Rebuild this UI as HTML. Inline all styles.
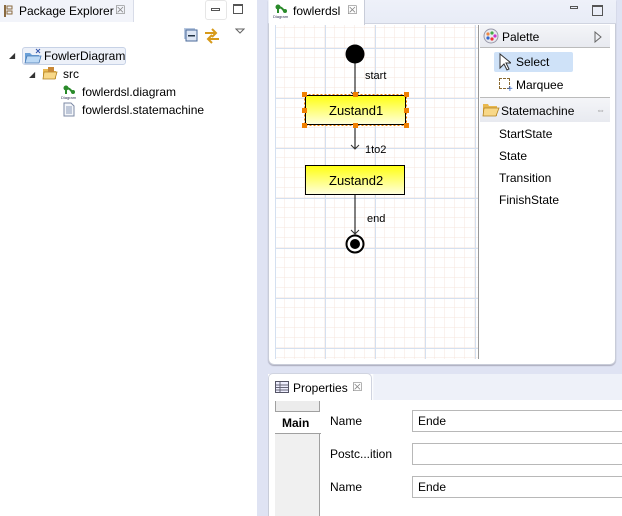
<!DOCTYPE html>
<html><head><style>
*{margin:0;padding:0;box-sizing:border-box}
body{width:622px;height:516px;overflow:hidden;background:#dfe3f3;font-family:"Liberation Sans","DejaVu Sans",sans-serif;font-size:12px;color:#000;position:relative}
.a{position:absolute}
.t{position:absolute;white-space:nowrap}
</style></head><body>
<!-- left panel -->
<div class="a" style="left:0;top:0;width:257px;height:516px;background:#fff"></div>
<div class="a" style="left:0;top:0;width:134px;height:22px;background:#f2f4fa;border-right:1px solid #d8dce8"></div>
<svg class="a" style="left:3px;top:4px" width="10" height="14"><rect x="1" y="1" width="2" height="12" fill="#8a6a40"/><rect x="4" y="2" width="5" height="3" fill="none" stroke="#8a6a40"/><rect x="4" y="7" width="5" height="3" fill="none" stroke="#8a6a40"/></svg>
<div class="t" style="left:19px;top:4px">Package Explorer</div>
<div class="t" style="left:115px;top:3px;color:#888;font-size:12px">&#x2612;</div>
<div class="a" style="left:205px;top:0;width:22px;height:20px;border:1px solid #e6e6e6;border-radius:3px"></div>
<div class="a" style="left:211px;top:8px;width:9px;height:3px;border:1px solid #555"></div>
<div class="a" style="left:233px;top:4px;width:10px;height:10px;border:1px solid #555;border-top-width:2px"></div>
<svg class="a" style="left:182px;top:27px" width="16" height="16"><rect x="2" y="1" width="11" height="11" fill="#b8c8e0"/><rect x="4" y="3" width="11" height="11" fill="#dde6f4" stroke="#4a6a9a"/><rect x="6" y="8" width="7" height="1.5" fill="#234"/></svg>
<svg class="a" style="left:203px;top:27px" width="18" height="18"><path d="M2 6h11M9 2l4 4-4 4M16 12H5M9 8l-4 4 4 4" stroke="#d79a1a" stroke-width="2" fill="none"/></svg>
<svg class="a" style="left:235px;top:28px" width="10" height="6"><path d="M1 1h8L5 5z" fill="none" stroke="#666"/></svg>
<div class="t" style="left:9px;top:51px;font-size:8px;color:#333">&#x25E2;</div>
<div class="a" style="left:22px;top:47px;width:104px;height:18px;background:#edf1f9;border:1px solid #c7d2e6;border-radius:3px"></div>
<svg class="a" style="left:24px;top:48px" width="18" height="16"><path d="M1 5h5l2 2h7v8H1z" fill="#6aa0d8"/><path d="M3 8h14l-2 7H1z" fill="#bcd9f5" stroke="#4a7ab4" stroke-width=".8"/><path d="M12 1l4 4M16 1l-4 4" stroke="#3355aa"/></svg>
<div class="t" style="left:44px;top:49px">FowlerDiagram</div>
<div class="t" style="left:29px;top:70px;font-size:8px;color:#333">&#x25E2;</div>
<svg class="a" style="left:42px;top:66px" width="16" height="14"><path d="M1 3h5l1 2h7v8H1z" fill="#e8b850"/><path d="M2 6h13l-2 7H1z" fill="#f8d888" stroke="#b08020" stroke-width=".8"/><rect x="6" y="1" width="6" height="5" fill="#c88838"/></svg>
<div class="t" style="left:63px;top:67px">src</div>
<svg class="a" style="left:61px;top:84px" width="18" height="16"><circle cx="5" cy="4" r="2.5" fill="#2a8a2a"/><path d="M5 4q4 0 6 4M5 4v6" stroke="#2a8a2a" stroke-width="2" fill="none"/><circle cx="12" cy="8" r="2" fill="#2a8a2a"/><text x="0" y="15" font-size="4" fill="#335">Diagram</text></svg>
<div class="t" style="left:82px;top:85px">fowlerdsl.diagram</div>
<svg class="a" style="left:63px;top:102px" width="12" height="15"><path d="M1 1h7l3 3v10H1z" fill="#f4f6fa" stroke="#7d8aa4"/><path d="M3 5h6M3 7h6M3 9h6M3 11h6" stroke="#8a9ab8"/></svg>
<div class="t" style="left:82px;top:103px">fowlerdsl.statemachine</div>

<!-- editor panel -->
<div class="a" style="left:268px;top:0;width:348px;height:365px;background:#fff;border:1px solid #c8ccd8;border-top:none;border-radius:0 0 6px 6px;box-shadow:0 1px 1px #aab"></div>
<div class="a" style="left:268px;top:0;width:348px;height:24px;background:linear-gradient(#eef1f9,#e8ecf6);border-bottom:1px solid #d0d4e0"></div>
<div class="a" style="left:269px;top:0;width:96px;height:25px;background:#fff;border-right:1px solid #c8ccd8"></div>
<svg class="a" style="left:273px;top:3px" width="18" height="16"><circle cx="5" cy="4" r="2.5" fill="#2a8a2a"/><path d="M5 4q4 0 6 4M5 4v6" stroke="#2a8a2a" stroke-width="2" fill="none"/><circle cx="12" cy="8" r="2" fill="#2a8a2a"/><text x="0" y="15" font-size="4" fill="#335">Diagram</text></svg>
<div class="t" style="left:293px;top:4px">fowlerdsl</div>
<div class="t" style="left:347px;top:3px;color:#888">&#x2612;</div>
<div class="a" style="left:570px;top:6px;width:8px;height:3px;border:1px solid #555"></div>
<div class="a" style="left:592px;top:5px;width:11px;height:11px;border:1px solid #555;border-top-width:2px"></div>
<!-- canvas -->
<svg class="a" style="left:275px;top:25px" width="204" height="334">
<defs>
<pattern id="mi" width="10" height="10" patternUnits="userSpaceOnUse" x="0" y="3"><path d="M10 0V10M0 10H10" stroke="#f6e6dc" stroke-width="1"/></pattern>
<pattern id="ma" width="50" height="50" patternUnits="userSpaceOnUse" x="0" y="23"><path d="M0.5 0V50M0 0.5H50" stroke="#d4e0f0" stroke-width="1"/></pattern>
<linearGradient id="yg" x1="0" y1="0" x2="0" y2="1"><stop offset="0" stop-color="#ffff10"/><stop offset="1" stop-color="#ffffe0"/></linearGradient>
</defs>
<rect width="204" height="334" fill="#fff"/>
<rect width="204" height="334" fill="url(#mi)"/>
<rect width="204" height="334" fill="url(#ma)"/>
<path d="M203.5 0V334" stroke="#999"/>
<circle cx="80" cy="29" r="9.5" fill="#000"/>
<path d="M80 38V124M80 170V210" stroke="#000"/>
<path d="M76 67l4 4 4-4M76 120l4 4 4-4M76 205l4 4 4-4" stroke="#333" fill="none"/>
<text x="90" y="54" font-size="11" font-family="Liberation Sans">start</text>
<text x="90" y="128" font-size="11" font-family="Liberation Sans">1to2</text>
<text x="92" y="197" font-size="11" font-family="Liberation Sans">end</text>
<rect x="30.5" y="70.5" width="100" height="29" fill="url(#yg)" stroke="#000"/>
<rect x="29.5" y="69.5" width="102" height="31" fill="none" stroke="#f08000" stroke-dasharray="2 2"/>
<g fill="#f08000"><rect x="27" y="67" width="5" height="5"/><rect x="78" y="67" width="5" height="5"/><rect x="129" y="67" width="5" height="5"/><rect x="27" y="83" width="5" height="5"/><rect x="129" y="83" width="5" height="5"/><rect x="27" y="98" width="5" height="5"/><rect x="78" y="98" width="5" height="5"/><rect x="129" y="98" width="5" height="5"/></g>
<text x="54" y="90" font-size="13" font-family="Liberation Sans">Zustand1</text>
<rect x="30.5" y="140.5" width="99" height="29" fill="url(#yg)" stroke="#000"/>
<text x="54" y="160" font-size="13" font-family="Liberation Sans">Zustand2</text>
<circle cx="80" cy="219" r="8.5" fill="#fff" stroke="#000" stroke-width="2"/>
<circle cx="80" cy="219" r="5" fill="#000"/>
</svg>
<!-- palette -->
<div class="a" style="left:480px;top:25px;width:130px;height:22px;background:linear-gradient(#f4f5f8,#e8eaf0)"></div>
<svg class="a" style="left:483px;top:28px" width="16" height="16"><circle cx="8" cy="8" r="7" fill="#e8eaf0" stroke="#99a"/><circle cx="5" cy="6" r="1.6" fill="#e84"/><circle cx="9" cy="5" r="1.6" fill="#4a4"/><circle cx="12" cy="8" r="1.6" fill="#c3c"/><circle cx="5" cy="10" r="1.6" fill="#36c"/><circle cx="9" cy="11" r="1.6" fill="#e33"/></svg>
<div class="t" style="left:502px;top:30px">Palette</div>
<svg class="a" style="left:594px;top:31px" width="8" height="12"><path d="M1 1l6 5-6 5z" fill="none" stroke="#666"/></svg>
<div class="a" style="left:480px;top:47px;width:130px;height:1px;background:#bbb"></div>
<div class="a" style="left:494px;top:52px;width:79px;height:20px;background:#cfe2f8;border-radius:2px"></div>
<svg class="a" style="left:499px;top:53px" width="12" height="18"><path d="M1 1v14l4-4 3 6 2-1-3-6h5z" fill="#fff" stroke="#333"/></svg>
<div class="t" style="left:516px;top:55px">Select</div>
<div class="a" style="left:499px;top:78px;width:11px;height:11px;border:1px dashed #8a6a30"></div>
<div class="t" style="left:507px;top:84px;color:#36c;font-size:10px">+</div>
<div class="t" style="left:516px;top:78px">Marquee</div>
<div class="a" style="left:480px;top:97px;width:130px;height:1px;background:#bbb"></div>
<div class="a" style="left:480px;top:98px;width:130px;height:24px;background:linear-gradient(#f4f5f8,#e8eaf0)"></div>
<svg class="a" style="left:482px;top:103px" width="18" height="14"><path d="M1 1h5l1 2h8v10H1z" fill="#e8b850"/><path d="M2 5h15l-3 8H1z" fill="#f8d888" stroke="#b08020" stroke-width=".8"/></svg>
<div class="t" style="left:501px;top:104px">Statemachine</div>
<div class="t" style="left:596px;top:105px;color:#888;font-size:9px">&#x21D4;</div>
<div class="t" style="left:499px;top:127px">StartState</div>
<div class="t" style="left:499px;top:149px">State</div>
<div class="t" style="left:499px;top:171px">Transition</div>
<div class="t" style="left:499px;top:193px">FinishState</div>

<!-- properties -->
<div class="a" style="left:268px;top:374px;width:354px;height:142px;background:#fff;border-left:1px solid #c8ccd8;border-top:1px solid #dde"></div>
<div class="a" style="left:268px;top:374px;width:354px;height:26px;background:linear-gradient(90deg,#fff 0,#fff 104px,#eef1f9 106px)"></div>
<div class="a" style="left:268px;top:373px;width:104px;height:27px;background:#fff;border:1px solid #d0d4e0;border-bottom:none;border-radius:5px 5px 0 0"></div>
<svg class="a" style="left:275px;top:381px" width="14" height="12"><rect x=".5" y=".5" width="13" height="11" fill="#eef" stroke="#556"/><path d="M1 4h12M1 6.5h12M1 9h12M5 1v10" stroke="#667"/></svg>
<div class="t" style="left:293px;top:381px">Properties</div>
<div class="t" style="left:352px;top:380px;color:#888">&#x2612;</div>
<div class="a" style="left:275px;top:401px;width:45px;height:115px;background:#f0f0f0;border-right:1px solid #a0a0a0"></div>
<div class="a" style="left:275px;top:401px;width:45px;height:11px;background:#ececec;border:1px solid #a0a0a0;border-top:none"></div>
<div class="a" style="left:275px;top:412px;width:46px;height:22px;background:#fff;border-bottom:1px solid #a0a0a0"></div>
<div class="t" style="left:282px;top:416px;font-weight:bold">Main</div>
<div class="t" style="left:330px;top:414px">Name</div>
<div class="t" style="left:330px;top:447px">Postc...ition</div>
<div class="t" style="left:330px;top:480px">Name</div>
<div class="a" style="left:412px;top:410px;width:214px;height:22px;border:1px solid #b8b8b8;background:#fff"></div>
<div class="a" style="left:412px;top:443px;width:214px;height:22px;border:1px solid #b8b8b8;background:#fff"></div>
<div class="a" style="left:412px;top:476px;width:214px;height:22px;border:1px solid #b8b8b8;background:#fff"></div>
<div class="t" style="left:418px;top:414px">Ende</div>
<div class="t" style="left:418px;top:480px">Ende</div>
</body></html>
